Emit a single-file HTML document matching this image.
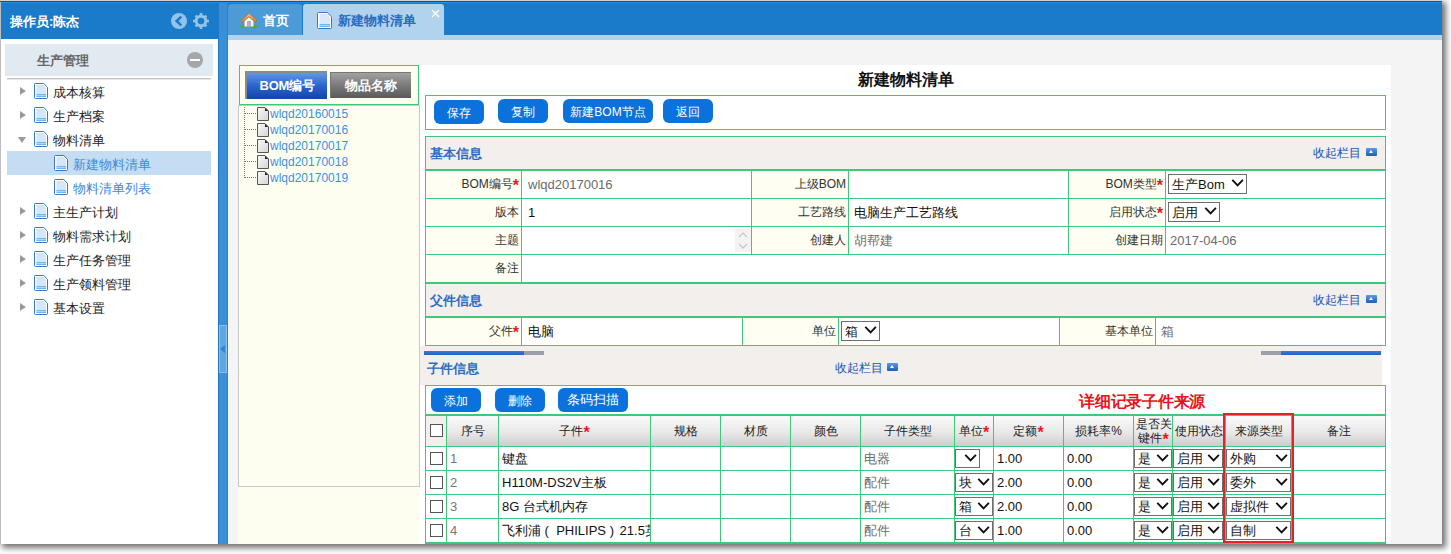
<!DOCTYPE html>
<html><head><meta charset="utf-8">
<style>
*{box-sizing:border-box;margin:0;padding:0}
html,body{width:1451px;height:554px;overflow:hidden;background:#fff;font-family:"Liberation Sans",sans-serif;color:#333}
.a{position:absolute}
#win{position:absolute;left:0;top:0;width:1442px;height:544px;background:#f4f4f4;overflow:hidden;box-shadow:3px 3px 6px 1px rgba(0,0,0,.55)}
.btn{position:absolute;height:24px;background:#0b72dc;border-radius:6px;color:#fff;font-size:12px;line-height:24px;text-align:center}
.cico{position:absolute;width:11px;height:8px;background:linear-gradient(#5b9ae6,#1f5cb8);border-radius:1px}
.cico:after{content:"";position:absolute;left:3px;top:2px;border-bottom:3px solid #fff;border-left:2.5px solid transparent;border-right:2.5px solid transparent}
.req{color:#f0141e;font-weight:bold;font-size:16px;line-height:1px;position:relative;top:3px}
.sel{position:absolute;border:1px solid #6e6e6e;background:#fff;font-size:13px;padding-left:3px;color:#111;white-space:nowrap}
</style></head><body>
<div id="win">
<div class="a" style="left:0px;top:0px;width:1442px;height:1px;background:#d9d0c7;"></div>
<div class="a" style="left:0px;top:1px;width:1442px;height:1px;background:#0557a6;"></div>
<div class="a" style="left:0px;top:2px;width:1px;height:542px;background:#bdbdbd;"></div>
<div class="a" style="left:1px;top:2px;width:217px;height:37px;background:#1a7bcb;"></div>
<div class="a" style="left:10px;top:13px;height:16px;line-height:16px;font-size:13px;color:#fff;white-space:nowrap;font-weight:bold;top:14px">操作员:陈杰</div>
<svg class="a" style="left:170px;top:12px" width="18" height="18" viewBox="0 0 18 18"><circle cx="9" cy="9" r="8" fill="#93c3ea"/><path d="M11.3 4.6L6.6 9l4.7 4.4" fill="none" stroke="#1a7bcb" stroke-width="2.5"/></svg>
<svg class="a" style="left:192px;top:12px" width="18" height="18" viewBox="0 0 18 18"><g fill="#93c3ea"><circle cx="9" cy="9" r="6.3"/><rect x="7.7" y="1" width="2.6" height="16"/><rect x="1" y="7.7" width="16" height="2.6"/><rect x="7.7" y="1.3" width="2.6" height="15.4" transform="rotate(45 9 9)"/><rect x="7.7" y="1.3" width="2.6" height="15.4" transform="rotate(-45 9 9)"/></g><circle cx="9" cy="9" r="3.3" fill="#1a7bcb"/></svg>
<div class="a" style="left:1px;top:39px;width:217px;height:505px;background:#fff;"></div>
<div class="a" style="left:5px;top:44px;width:208px;height:32px;background:#e1e9f1;"></div>
<div class="a" style="left:37px;top:52px;height:16px;line-height:16px;font-size:13px;color:#666;white-space:nowrap;font-weight:bold;top:53px">生产管理</div>
<div class="a" style="left:187px;top:52px;width:16px;height:16px;border-radius:50%;background:#a4a6a8"></div>
<div class="a" style="left:190px;top:59px;width:10px;height:2px;background:#fff;"></div>
<div class="a" style="left:7px;top:78px;width:204px;height:1px;background:#c4c4c4;"></div>
<div class="a" style="left:7px;top:79px;width:204px;height:1px;background:#e6e6e6;"></div>
<div class="a" style="left:20px;top:87px;width:0;height:0;border-left:6px solid #9a9a9a;border-top:4.5px solid transparent;border-bottom:4.5px solid transparent"></div>
<svg class="a" style="left:34px;top:83px" width="14" height="16" viewBox="0 0 14 16"><path d="M1.5 .5h8.2l3.8 3.8v10.2a1 1 0 0 1-1 1h-11a1 1 0 0 1-1-1v-13a1 1 0 0 1 1-1z" fill="#fff" stroke="#3b74c9"/><path d="M2.5 2h6.8l2.7 2.7V11H2.5z" fill="#d3e6fa"/><rect x="2.5" y="11" width="9.5" height="3" fill="#68b9f2"/><rect x="3" y="12" width="8.5" height="1" fill="#a9dafb"/></svg>
<div class="a" style="left:53px;top:81px;height:24px;line-height:24px;font-size:13px;color:#222;white-space:nowrap;">成本核算</div>
<div class="a" style="left:20px;top:111px;width:0;height:0;border-left:6px solid #9a9a9a;border-top:4.5px solid transparent;border-bottom:4.5px solid transparent"></div>
<svg class="a" style="left:34px;top:107px" width="14" height="16" viewBox="0 0 14 16"><path d="M1.5 .5h8.2l3.8 3.8v10.2a1 1 0 0 1-1 1h-11a1 1 0 0 1-1-1v-13a1 1 0 0 1 1-1z" fill="#fff" stroke="#3b74c9"/><path d="M2.5 2h6.8l2.7 2.7V11H2.5z" fill="#d3e6fa"/><rect x="2.5" y="11" width="9.5" height="3" fill="#68b9f2"/><rect x="3" y="12" width="8.5" height="1" fill="#a9dafb"/></svg>
<div class="a" style="left:53px;top:105px;height:24px;line-height:24px;font-size:13px;color:#222;white-space:nowrap;">生产档案</div>
<div class="a" style="left:18px;top:137px;width:0;height:0;border-top:6px solid #9a9a9a;border-left:4.5px solid transparent;border-right:4.5px solid transparent"></div>
<svg class="a" style="left:34px;top:131px" width="14" height="16" viewBox="0 0 14 16"><path d="M1.5 .5h8.2l3.8 3.8v10.2a1 1 0 0 1-1 1h-11a1 1 0 0 1-1-1v-13a1 1 0 0 1 1-1z" fill="#fff" stroke="#3b74c9"/><path d="M2.5 2h6.8l2.7 2.7V11H2.5z" fill="#d3e6fa"/><rect x="2.5" y="11" width="9.5" height="3" fill="#68b9f2"/><rect x="3" y="12" width="8.5" height="1" fill="#a9dafb"/></svg>
<div class="a" style="left:53px;top:129px;height:24px;line-height:24px;font-size:13px;color:#222;white-space:nowrap;">物料清单</div>
<div class="a" style="left:7px;top:151px;width:204px;height:24px;background:#c4ddf2;"></div>
<svg class="a" style="left:54px;top:155px" width="14" height="16" viewBox="0 0 14 16"><path d="M1.5 .5h8.2l3.8 3.8v10.2a1 1 0 0 1-1 1h-11a1 1 0 0 1-1-1v-13a1 1 0 0 1 1-1z" fill="#fff" stroke="#3b74c9"/><path d="M2.5 2h6.8l2.7 2.7V11H2.5z" fill="#d3e6fa"/><rect x="2.5" y="11" width="9.5" height="3" fill="#68b9f2"/><rect x="3" y="12" width="8.5" height="1" fill="#a9dafb"/></svg>
<div class="a" style="left:73px;top:153px;height:24px;line-height:24px;font-size:13px;color:#3c8ad9;white-space:nowrap;">新建物料清单</div>
<svg class="a" style="left:54px;top:179px" width="14" height="16" viewBox="0 0 14 16"><path d="M1.5 .5h8.2l3.8 3.8v10.2a1 1 0 0 1-1 1h-11a1 1 0 0 1-1-1v-13a1 1 0 0 1 1-1z" fill="#fff" stroke="#3b74c9"/><path d="M2.5 2h6.8l2.7 2.7V11H2.5z" fill="#d3e6fa"/><rect x="2.5" y="11" width="9.5" height="3" fill="#68b9f2"/><rect x="3" y="12" width="8.5" height="1" fill="#a9dafb"/></svg>
<div class="a" style="left:73px;top:177px;height:24px;line-height:24px;font-size:13px;color:#3c8ad9;white-space:nowrap;">物料清单列表</div>
<div class="a" style="left:20px;top:207px;width:0;height:0;border-left:6px solid #9a9a9a;border-top:4.5px solid transparent;border-bottom:4.5px solid transparent"></div>
<svg class="a" style="left:34px;top:203px" width="14" height="16" viewBox="0 0 14 16"><path d="M1.5 .5h8.2l3.8 3.8v10.2a1 1 0 0 1-1 1h-11a1 1 0 0 1-1-1v-13a1 1 0 0 1 1-1z" fill="#fff" stroke="#3b74c9"/><path d="M2.5 2h6.8l2.7 2.7V11H2.5z" fill="#d3e6fa"/><rect x="2.5" y="11" width="9.5" height="3" fill="#68b9f2"/><rect x="3" y="12" width="8.5" height="1" fill="#a9dafb"/></svg>
<div class="a" style="left:53px;top:201px;height:24px;line-height:24px;font-size:13px;color:#222;white-space:nowrap;">主生产计划</div>
<div class="a" style="left:20px;top:231px;width:0;height:0;border-left:6px solid #9a9a9a;border-top:4.5px solid transparent;border-bottom:4.5px solid transparent"></div>
<svg class="a" style="left:34px;top:227px" width="14" height="16" viewBox="0 0 14 16"><path d="M1.5 .5h8.2l3.8 3.8v10.2a1 1 0 0 1-1 1h-11a1 1 0 0 1-1-1v-13a1 1 0 0 1 1-1z" fill="#fff" stroke="#3b74c9"/><path d="M2.5 2h6.8l2.7 2.7V11H2.5z" fill="#d3e6fa"/><rect x="2.5" y="11" width="9.5" height="3" fill="#68b9f2"/><rect x="3" y="12" width="8.5" height="1" fill="#a9dafb"/></svg>
<div class="a" style="left:53px;top:225px;height:24px;line-height:24px;font-size:13px;color:#222;white-space:nowrap;">物料需求计划</div>
<div class="a" style="left:20px;top:255px;width:0;height:0;border-left:6px solid #9a9a9a;border-top:4.5px solid transparent;border-bottom:4.5px solid transparent"></div>
<svg class="a" style="left:34px;top:251px" width="14" height="16" viewBox="0 0 14 16"><path d="M1.5 .5h8.2l3.8 3.8v10.2a1 1 0 0 1-1 1h-11a1 1 0 0 1-1-1v-13a1 1 0 0 1 1-1z" fill="#fff" stroke="#3b74c9"/><path d="M2.5 2h6.8l2.7 2.7V11H2.5z" fill="#d3e6fa"/><rect x="2.5" y="11" width="9.5" height="3" fill="#68b9f2"/><rect x="3" y="12" width="8.5" height="1" fill="#a9dafb"/></svg>
<div class="a" style="left:53px;top:249px;height:24px;line-height:24px;font-size:13px;color:#222;white-space:nowrap;">生产任务管理</div>
<div class="a" style="left:20px;top:279px;width:0;height:0;border-left:6px solid #9a9a9a;border-top:4.5px solid transparent;border-bottom:4.5px solid transparent"></div>
<svg class="a" style="left:34px;top:275px" width="14" height="16" viewBox="0 0 14 16"><path d="M1.5 .5h8.2l3.8 3.8v10.2a1 1 0 0 1-1 1h-11a1 1 0 0 1-1-1v-13a1 1 0 0 1 1-1z" fill="#fff" stroke="#3b74c9"/><path d="M2.5 2h6.8l2.7 2.7V11H2.5z" fill="#d3e6fa"/><rect x="2.5" y="11" width="9.5" height="3" fill="#68b9f2"/><rect x="3" y="12" width="8.5" height="1" fill="#a9dafb"/></svg>
<div class="a" style="left:53px;top:273px;height:24px;line-height:24px;font-size:13px;color:#222;white-space:nowrap;">生产领料管理</div>
<div class="a" style="left:20px;top:303px;width:0;height:0;border-left:6px solid #9a9a9a;border-top:4.5px solid transparent;border-bottom:4.5px solid transparent"></div>
<svg class="a" style="left:34px;top:299px" width="14" height="16" viewBox="0 0 14 16"><path d="M1.5 .5h8.2l3.8 3.8v10.2a1 1 0 0 1-1 1h-11a1 1 0 0 1-1-1v-13a1 1 0 0 1 1-1z" fill="#fff" stroke="#3b74c9"/><path d="M2.5 2h6.8l2.7 2.7V11H2.5z" fill="#d3e6fa"/><rect x="2.5" y="11" width="9.5" height="3" fill="#68b9f2"/><rect x="3" y="12" width="8.5" height="1" fill="#a9dafb"/></svg>
<div class="a" style="left:53px;top:297px;height:24px;line-height:24px;font-size:13px;color:#222;white-space:nowrap;">基本设置</div>
<div class="a" style="left:218px;top:2px;width:10px;height:542px;background:#3a8fd6;border-left:1px solid #1f78c9;border-right:1px solid #2a82cf"></div>
<div class="a" style="left:219px;top:325px;width:8px;height:48px;background:#62a6e0;border:1px solid #8cc0ec"></div>
<div class="a" style="left:220px;top:345px;width:0;height:0;border-right:5px solid #2d86d3;border-top:4.5px solid transparent;border-bottom:4.5px solid transparent"></div>
<div class="a" style="left:228px;top:2px;width:1214px;height:33px;background:#1a7bcb;"></div>
<div class="a" style="left:228px;top:4px;width:74px;height:31px;background:#4c9ad8;border-radius:3px 3px 0 0"></div>
<svg class="a" style="left:240px;top:12px" width="18" height="16" viewBox="0 0 18 16"><defs><linearGradient id="roof" x1="0" y1="0" x2="0" y2="1"><stop offset="0" stop-color="#f3c070"/><stop offset="1" stop-color="#c7802e"/></linearGradient></defs><ellipse cx="4" cy="14.3" rx="3.6" ry="1.6" fill="#4caa3a"/><ellipse cx="14" cy="14.3" rx="3.6" ry="1.6" fill="#4caa3a"/><path d="M4.6 8.6L9 4.9 13.4 8.6V14.6H4.6z" fill="#f8f8f8" stroke="#b9b9b9" stroke-width=".6"/><rect x="7.3" y="9.2" width="3.4" height="5.4" fill="#8a8a8a"/><rect x="7.9" y="9.8" width="2.2" height="4.8" fill="#b4b4b4"/><path d="M.8 8.6L9 1.3 17.2 8.6 15.6 10.4 9 4.8 2.4 10.4z" fill="url(#roof)" stroke="#a8682a" stroke-width=".6"/></svg>
<div class="a" style="left:263px;top:13px;height:16px;line-height:16px;font-size:13px;color:#fff;white-space:nowrap;font-weight:bold">首页</div>
<div class="a" style="left:303px;top:4px;width:141px;height:31px;background:#b1d3ee;border-radius:3px 3px 0 0"></div>
<svg class="a" style="left:317px;top:12px" width="15" height="17" viewBox="0 0 15 17"><path d="M1.5 .5h8.7l4.3 4.3v10.7a1 1 0 0 1-1 1h-12a1 1 0 0 1-1-1v-14a1 1 0 0 1 1-1z" fill="#fff" stroke="#3b74c9"/><path d="M2.5 2h7.3l3.2 3.2V12H2.5z" fill="#d9e9fa"/><rect x="2.5" y="12" width="10.5" height="3" fill="#68b9f2"/><rect x="3" y="13" width="9.5" height="1" fill="#a9dafb"/></svg>
<div class="a" style="left:338px;top:13px;height:16px;line-height:16px;font-size:13px;color:#2a6cc0;white-space:nowrap;font-weight:bold">新建物料清单</div>
<svg class="a" style="left:431px;top:9px" width="9" height="9" viewBox="0 0 9 9"><path d="M1 1l7 7M8 1L1 8" stroke="#fff" stroke-width="1.3"/></svg>
<div class="a" style="left:228px;top:35px;width:1214px;height:5px;background:#b1d3ee;"></div>
<div class="a" style="left:1px;top:2px;width:1441px;height:1px;background:#1f8fe6;"></div>
<div class="a" style="left:238px;top:105px;width:182px;height:439px;background:#fefef0;"></div>
<div class="a" style="left:239px;top:65px;width:180px;height:40px;background:#fefef0;border:1px solid #3ec879"></div>
<div class="a" style="left:245px;top:71px;width:82px;height:28px;border-top:2px solid #8a8a8a;border-left:2px solid #8a8a8a;background:linear-gradient(#6197e4,#2a64cc 50%,#1244ac);color:#fff;font-weight:bold;font-size:13px;line-height:26px;text-align:center;letter-spacing:-0.3px">BOM编号</div>
<div class="a" style="left:330px;top:72px;width:81px;height:26px;border-top:1px solid #777;border-left:1px solid #777;background:linear-gradient(#a2a2a2,#7a7a7a 50%,#5a5a5a);color:#fff;font-weight:bold;font-size:13px;line-height:25px;text-align:center">物品名称</div>
<div class="a" style="left:238px;top:105px;width:182px;height:382px;background:transparent;border:1px solid #c9c9c9"></div>
<div class="a" style="left:244px;top:107px;width:1px;height:71px;border-left:1px dotted #777"></div>
<div class="a" style="left:245px;top:113px;width:11px;height:1px;border-top:1px dotted #777"></div>
<svg class="a" style="left:257px;top:107px" width="12" height="14" viewBox="0 0 12 14"><defs><linearGradient id="fg" x1="0" y1="0" x2="1" y2="1"><stop offset="0" stop-color="#fafafa"/><stop offset="1" stop-color="#d4d4d4"/></linearGradient></defs><path d="M.5 .5h7.5l3.5 3.5v9.5h-11z" fill="url(#fg)" stroke="#555"/><path d="M8 .8l3.2 3.2H8z" fill="#222"/></svg>
<div class="a" style="left:270px;top:106px;height:16px;line-height:16px;font-size:12px;color:#3d8ee6;white-space:nowrap;">wlqd20160015</div>
<div class="a" style="left:245px;top:129px;width:11px;height:1px;border-top:1px dotted #777"></div>
<svg class="a" style="left:257px;top:123px" width="12" height="14" viewBox="0 0 12 14"><defs><linearGradient id="fg" x1="0" y1="0" x2="1" y2="1"><stop offset="0" stop-color="#fafafa"/><stop offset="1" stop-color="#d4d4d4"/></linearGradient></defs><path d="M.5 .5h7.5l3.5 3.5v9.5h-11z" fill="url(#fg)" stroke="#555"/><path d="M8 .8l3.2 3.2H8z" fill="#222"/></svg>
<div class="a" style="left:270px;top:122px;height:16px;line-height:16px;font-size:12px;color:#3d8ee6;white-space:nowrap;">wlqd20170016</div>
<div class="a" style="left:245px;top:145px;width:11px;height:1px;border-top:1px dotted #777"></div>
<svg class="a" style="left:257px;top:139px" width="12" height="14" viewBox="0 0 12 14"><defs><linearGradient id="fg" x1="0" y1="0" x2="1" y2="1"><stop offset="0" stop-color="#fafafa"/><stop offset="1" stop-color="#d4d4d4"/></linearGradient></defs><path d="M.5 .5h7.5l3.5 3.5v9.5h-11z" fill="url(#fg)" stroke="#555"/><path d="M8 .8l3.2 3.2H8z" fill="#222"/></svg>
<div class="a" style="left:270px;top:138px;height:16px;line-height:16px;font-size:12px;color:#3d8ee6;white-space:nowrap;">wlqd20170017</div>
<div class="a" style="left:245px;top:161px;width:11px;height:1px;border-top:1px dotted #777"></div>
<svg class="a" style="left:257px;top:155px" width="12" height="14" viewBox="0 0 12 14"><defs><linearGradient id="fg" x1="0" y1="0" x2="1" y2="1"><stop offset="0" stop-color="#fafafa"/><stop offset="1" stop-color="#d4d4d4"/></linearGradient></defs><path d="M.5 .5h7.5l3.5 3.5v9.5h-11z" fill="url(#fg)" stroke="#555"/><path d="M8 .8l3.2 3.2H8z" fill="#222"/></svg>
<div class="a" style="left:270px;top:154px;height:16px;line-height:16px;font-size:12px;color:#3d8ee6;white-space:nowrap;">wlqd20170018</div>
<div class="a" style="left:245px;top:177px;width:11px;height:1px;border-top:1px dotted #777"></div>
<svg class="a" style="left:257px;top:171px" width="12" height="14" viewBox="0 0 12 14"><defs><linearGradient id="fg" x1="0" y1="0" x2="1" y2="1"><stop offset="0" stop-color="#fafafa"/><stop offset="1" stop-color="#d4d4d4"/></linearGradient></defs><path d="M.5 .5h7.5l3.5 3.5v9.5h-11z" fill="url(#fg)" stroke="#555"/><path d="M8 .8l3.2 3.2H8z" fill="#222"/></svg>
<div class="a" style="left:270px;top:170px;height:16px;line-height:16px;font-size:12px;color:#3d8ee6;white-space:nowrap;">wlqd20170019</div>
<div class="a" style="left:420px;top:65px;width:971px;height:479px;background:#fff;"></div>
<div class="a" style="left:420px;top:70px;width:971px;text-align:center;font-size:16px;font-weight:bold;color:#111;line-height:20px">新建物料清单</div>
<div class="a" style="left:425px;top:95px;width:961px;height:1px;background:#3ec879;"></div>
<div class="a" style="left:425px;top:129px;width:961px;height:1px;background:#3ec879;"></div>
<div class="a" style="left:425px;top:95px;width:1px;height:35px;background:#3ec879;"></div>
<div class="a" style="left:1385px;top:95px;width:1px;height:35px;background:#3ec879;"></div>
<div class="btn" style="left:434px;top:100px;width:50px;font-size:12px;line-height:26px">保存</div>
<div class="btn" style="left:498px;top:99px;width:50px;font-size:12px;line-height:26px">复制</div>
<div class="btn" style="left:563px;top:99px;width:90px;font-size:12px;line-height:26px">新建BOM节点</div>
<div class="btn" style="left:663px;top:99px;width:50px;font-size:12px;line-height:26px">返回</div>
<div class="a" style="left:425px;top:137px;width:960px;height:32px;background:#f2efed;"></div>
<div class="a" style="left:430px;top:138px;height:32px;line-height:32px;font-size:13px;color:#2b6cc4;white-space:nowrap;font-weight:bold">基本信息</div>
<div class="a" style="left:1313px;top:137px;height:32px;line-height:32px;font-size:12px;color:#1d52b3;white-space:nowrap;">收起栏目</div>
<div class="cico" style="left:1366px;top:148px"></div>
<div class="a" style="left:426px;top:171px;width:95px;height:27px;background:#fefef2;"></div>
<div class="a" style="left:752px;top:171px;width:96px;height:27px;background:#fefef2;"></div>
<div class="a" style="left:1069px;top:171px;width:96px;height:27px;background:#fefef2;"></div>
<div class="a" style="left:426px;top:199px;width:95px;height:27px;background:#fefef2;"></div>
<div class="a" style="left:752px;top:199px;width:96px;height:27px;background:#fefef2;"></div>
<div class="a" style="left:1069px;top:199px;width:96px;height:27px;background:#fefef2;"></div>
<div class="a" style="left:426px;top:227px;width:95px;height:27px;background:#fefef2;"></div>
<div class="a" style="left:752px;top:227px;width:96px;height:27px;background:#fefef2;"></div>
<div class="a" style="left:1069px;top:227px;width:96px;height:27px;background:#fefef2;"></div>
<div class="a" style="left:426px;top:255px;width:95px;height:27px;background:#fefef2;"></div>
<div class="a" style="left:425px;top:136px;width:961px;height:1px;background:#3ec879;"></div>
<div class="a" style="left:425px;top:169px;width:961px;height:2px;background:#3ec879;"></div>
<div class="a" style="left:425px;top:198px;width:961px;height:1px;background:#3ec879;"></div>
<div class="a" style="left:425px;top:226px;width:961px;height:1px;background:#3ec879;"></div>
<div class="a" style="left:425px;top:254px;width:961px;height:1px;background:#3ec879;"></div>
<div class="a" style="left:425px;top:282px;width:961px;height:2px;background:#3ec879;"></div>
<div class="a" style="left:425px;top:136px;width:1px;height:210px;background:#3ec879;"></div>
<div class="a" style="left:1385px;top:136px;width:1px;height:210px;background:#3ec879;"></div>
<div class="a" style="left:521px;top:170px;width:1px;height:85px;background:#3ec879;"></div>
<div class="a" style="left:751px;top:170px;width:1px;height:85px;background:#3ec879;"></div>
<div class="a" style="left:848px;top:170px;width:1px;height:85px;background:#3ec879;"></div>
<div class="a" style="left:1068px;top:170px;width:1px;height:85px;background:#3ec879;"></div>
<div class="a" style="left:1165px;top:170px;width:1px;height:85px;background:#3ec879;"></div>
<div class="a" style="left:521px;top:254px;width:1px;height:29px;background:#3ec879;"></div>
<div class="a" style="right:923px;top:171px;height:27px;line-height:27px;font-size:12px;color:#333;white-space:nowrap;">BOM编号<span class="req">*</span></div>
<div class="a" style="right:596px;top:171px;height:27px;line-height:27px;font-size:12px;color:#333;white-space:nowrap;">上级BOM</div>
<div class="a" style="right:279px;top:171px;height:27px;line-height:27px;font-size:12px;color:#333;white-space:nowrap;">BOM类型<span class="req">*</span></div>
<div class="a" style="right:923px;top:199px;height:27px;line-height:27px;font-size:12px;color:#333;white-space:nowrap;">版本</div>
<div class="a" style="right:596px;top:199px;height:27px;line-height:27px;font-size:12px;color:#333;white-space:nowrap;">工艺路线</div>
<div class="a" style="right:279px;top:199px;height:27px;line-height:27px;font-size:12px;color:#333;white-space:nowrap;">启用状态<span class="req">*</span></div>
<div class="a" style="right:923px;top:227px;height:27px;line-height:27px;font-size:12px;color:#333;white-space:nowrap;">主题</div>
<div class="a" style="right:596px;top:227px;height:27px;line-height:27px;font-size:12px;color:#333;white-space:nowrap;">创建人</div>
<div class="a" style="right:279px;top:227px;height:27px;line-height:27px;font-size:12px;color:#333;white-space:nowrap;">创建日期</div>
<div class="a" style="right:923px;top:255px;height:27px;line-height:27px;font-size:12px;color:#333;white-space:nowrap;">备注</div>
<div class="a" style="left:528px;top:171px;height:27px;line-height:27px;font-size:13px;color:#6b6b6b;white-space:nowrap;">wlqd20170016</div>
<div class="sel" style="left:1168px;top:174px;width:79px;height:20px;line-height:18px;padding-top:1px;">生产Bom<svg class="a" style="right:2px;top:3px" width="13" height="9" viewBox="0 0 13 9"><path d="M1.3 1.8l5.3 5.6 5.3-5.6" fill="none" stroke="#111" stroke-width="1.9"/></svg></div>
<div class="a" style="left:528px;top:199px;height:27px;line-height:27px;font-size:13px;color:#111;white-space:nowrap;">1</div>
<div class="a" style="left:854px;top:199px;height:27px;line-height:27px;font-size:13px;color:#111;white-space:nowrap;">电脑生产工艺路线</div>
<div class="sel" style="left:1168px;top:202px;width:52px;height:20px;line-height:18px;padding-top:1px;">启用<svg class="a" style="right:2px;top:3px" width="13" height="9" viewBox="0 0 13 9"><path d="M1.3 1.8l5.3 5.6 5.3-5.6" fill="none" stroke="#111" stroke-width="1.9"/></svg></div>
<div class="a" style="left:735px;top:229px;width:16px;height:23px;background:#f3f3f3;"></div>
<svg class="a" style="left:735px;top:229px" width="16" height="23" viewBox="0 0 16 23"><path d="M4 8l4-4 4 4M4 15l4 4 4-4" fill="none" stroke="#c4c4c4" stroke-width="1.2"/></svg>
<div class="a" style="left:854px;top:227px;height:27px;line-height:27px;font-size:13px;color:#6b6b6b;white-space:nowrap;">胡帮建</div>
<div class="a" style="left:1170px;top:227px;height:27px;line-height:27px;font-size:13px;color:#6b6b6b;white-space:nowrap;">2017-04-06</div>
<div class="a" style="left:426px;top:284px;width:959px;height:32px;background:#f2efed;"></div>
<div class="a" style="left:430px;top:285px;height:32px;line-height:32px;font-size:13px;color:#2b6cc4;white-space:nowrap;font-weight:bold">父件信息</div>
<div class="a" style="left:1313px;top:284px;height:32px;line-height:32px;font-size:12px;color:#1d52b3;white-space:nowrap;">收起栏目</div>
<div class="cico" style="left:1366px;top:295px"></div>
<div class="a" style="left:425px;top:316px;width:961px;height:2px;background:#3ec879;"></div>
<div class="a" style="left:425px;top:345px;width:961px;height:1px;background:#3ec879;"></div>
<div class="a" style="left:426px;top:318px;width:95px;height:27px;background:#fefef2;"></div>
<div class="a" style="left:743px;top:318px;width:95px;height:27px;background:#fefef2;"></div>
<div class="a" style="left:1060px;top:318px;width:95px;height:27px;background:#fefef2;"></div>
<div class="a" style="left:521px;top:318px;width:1px;height:28px;background:#3ec879;"></div>
<div class="a" style="left:742px;top:318px;width:1px;height:28px;background:#3ec879;"></div>
<div class="a" style="left:838px;top:318px;width:1px;height:28px;background:#3ec879;"></div>
<div class="a" style="left:1059px;top:318px;width:1px;height:28px;background:#3ec879;"></div>
<div class="a" style="left:1155px;top:318px;width:1px;height:28px;background:#3ec879;"></div>
<div class="a" style="right:923px;top:318px;height:27px;line-height:27px;font-size:12px;color:#333;white-space:nowrap;">父件<span class="req">*</span></div>
<div class="a" style="right:606px;top:318px;height:27px;line-height:27px;font-size:12px;color:#333;white-space:nowrap;">单位</div>
<div class="a" style="right:289px;top:318px;height:27px;line-height:27px;font-size:12px;color:#333;white-space:nowrap;">基本单位</div>
<div class="a" style="left:528px;top:318px;height:27px;line-height:27px;font-size:13px;color:#111;white-space:nowrap;">电脑</div>
<div class="sel" style="left:841px;top:321px;width:39px;height:20px;line-height:18px;padding-top:1px;">箱<svg class="a" style="right:2px;top:3px" width="13" height="9" viewBox="0 0 13 9"><path d="M1.3 1.8l5.3 5.6 5.3-5.6" fill="none" stroke="#111" stroke-width="1.9"/></svg></div>
<div class="a" style="left:1161px;top:318px;height:27px;line-height:27px;font-size:13px;color:#6b6b6b;white-space:nowrap;">箱</div>
<div class="a" style="left:420px;top:346px;width:962px;height:39px;background:#f2efed;"></div>
<div class="a" style="left:424px;top:351px;width:100px;height:4px;background:linear-gradient(#3580d4,#2263bd);"></div>
<div class="a" style="left:524px;top:351px;width:20px;height:4px;background:#9aa0ab;"></div>
<div class="a" style="left:1261px;top:351px;width:20px;height:4px;background:#9aa0ab;"></div>
<div class="a" style="left:1281px;top:351px;width:100px;height:4px;background:linear-gradient(#3580d4,#2263bd);"></div>
<div class="a" style="left:427px;top:359px;height:20px;line-height:20px;font-size:13px;color:#2b6cc4;white-space:nowrap;font-weight:bold">子件信息</div>
<div class="a" style="left:835px;top:358px;height:20px;line-height:20px;font-size:12px;color:#1d52b3;white-space:nowrap;">收起栏目</div>
<div class="cico" style="left:887px;top:363px"></div>
<div class="a" style="left:425px;top:386px;width:960px;height:28px;background:#fff;"></div>
<div class="a" style="left:425px;top:385px;width:961px;height:1px;background:#3ec879;"></div>
<div class="a" style="left:425px;top:385px;width:1px;height:159px;background:#3ec879;"></div>
<div class="a" style="left:1385px;top:385px;width:1px;height:159px;background:#3ec879;"></div>
<div class="a" style="left:425px;top:414px;width:961px;height:2px;background:#3ec879;"></div>
<div class="btn" style="left:431px;top:388px;width:50px;font-size:12px;line-height:26px">添加</div>
<div class="btn" style="left:495px;top:388px;width:50px;font-size:12px;line-height:26px">删除</div>
<div class="btn" style="left:558px;top:388px;width:70px;font-size:13px;line-height:24px">条码扫描</div>
<div class="a" style="left:1079px;top:389px;height:26px;line-height:26px;font-size:16px;color:#e8141c;white-space:nowrap;font-weight:bold;letter-spacing:-0.25px">详细记录子件来源</div>
<div class="a" style="left:426px;top:416px;width:20px;height:30px;background:#f3efec;"></div>
<div class="a" style="left:447px;top:416px;width:51px;height:30px;background:linear-gradient(#fafafa,#e8e8e8 55%,#cdcdcd);"></div>
<div class="a" style="left:499px;top:416px;width:151px;height:30px;background:linear-gradient(#fafafa,#e8e8e8 55%,#cdcdcd);"></div>
<div class="a" style="left:651px;top:416px;width:69px;height:30px;background:linear-gradient(#fafafa,#e8e8e8 55%,#cdcdcd);"></div>
<div class="a" style="left:721px;top:416px;width:69px;height:30px;background:linear-gradient(#fafafa,#e8e8e8 55%,#cdcdcd);"></div>
<div class="a" style="left:791px;top:416px;width:69px;height:30px;background:linear-gradient(#fafafa,#e8e8e8 55%,#cdcdcd);"></div>
<div class="a" style="left:861px;top:416px;width:93px;height:30px;background:linear-gradient(#fafafa,#e8e8e8 55%,#cdcdcd);"></div>
<div class="a" style="left:955px;top:416px;width:38px;height:30px;background:linear-gradient(#fafafa,#e8e8e8 55%,#cdcdcd);"></div>
<div class="a" style="left:994px;top:416px;width:69px;height:30px;background:linear-gradient(#fafafa,#e8e8e8 55%,#cdcdcd);"></div>
<div class="a" style="left:1064px;top:416px;width:69px;height:30px;background:linear-gradient(#fafafa,#e8e8e8 55%,#cdcdcd);"></div>
<div class="a" style="left:1134px;top:416px;width:38px;height:30px;background:linear-gradient(#fafafa,#e8e8e8 55%,#cdcdcd);"></div>
<div class="a" style="left:1173px;top:416px;width:52px;height:30px;background:linear-gradient(#fafafa,#e8e8e8 55%,#cdcdcd);"></div>
<div class="a" style="left:1226px;top:416px;width:65px;height:30px;background:linear-gradient(#fafafa,#e8e8e8 55%,#cdcdcd);"></div>
<div class="a" style="left:1292px;top:416px;width:93px;height:30px;background:linear-gradient(#fafafa,#e8e8e8 55%,#cdcdcd);"></div>
<div class="a" style="left:425px;top:446px;width:961px;height:1px;background:#3ec879;"></div>
<div class="a" style="left:425px;top:470px;width:961px;height:1px;background:#3ec879;"></div>
<div class="a" style="left:425px;top:494px;width:961px;height:1px;background:#3ec879;"></div>
<div class="a" style="left:425px;top:518px;width:961px;height:1px;background:#3ec879;"></div>
<div class="a" style="left:425px;top:542px;width:961px;height:2px;background:#3ec879;"></div>
<div class="a" style="left:446px;top:416px;width:1px;height:127px;background:#3ec879;"></div>
<div class="a" style="left:498px;top:416px;width:1px;height:127px;background:#3ec879;"></div>
<div class="a" style="left:650px;top:416px;width:1px;height:127px;background:#3ec879;"></div>
<div class="a" style="left:720px;top:416px;width:1px;height:127px;background:#3ec879;"></div>
<div class="a" style="left:790px;top:416px;width:1px;height:127px;background:#3ec879;"></div>
<div class="a" style="left:860px;top:416px;width:1px;height:127px;background:#3ec879;"></div>
<div class="a" style="left:954px;top:416px;width:1px;height:127px;background:#3ec879;"></div>
<div class="a" style="left:993px;top:416px;width:1px;height:127px;background:#3ec879;"></div>
<div class="a" style="left:1063px;top:416px;width:1px;height:127px;background:#3ec879;"></div>
<div class="a" style="left:1133px;top:416px;width:1px;height:127px;background:#3ec879;"></div>
<div class="a" style="left:1172px;top:416px;width:1px;height:127px;background:#3ec879;"></div>
<div class="a" style="left:1225px;top:416px;width:1px;height:127px;background:#3ec879;"></div>
<div class="a" style="left:1291px;top:416px;width:1px;height:127px;background:#3ec879;"></div>
<div class="a" style="left:430px;top:424px;width:13px;height:13px;background:#fff;border:1px solid #555"></div>
<div class="a" style="left:447px;top:416px;width:51px;height:30px;line-height:30px;text-align:center;font-size:12px;color:#222;white-space:nowrap">序号</div>
<div class="a" style="left:499px;top:416px;width:151px;height:30px;line-height:30px;text-align:center;font-size:12px;color:#222;white-space:nowrap">子件<span class="req">*</span></div>
<div class="a" style="left:651px;top:416px;width:69px;height:30px;line-height:30px;text-align:center;font-size:12px;color:#222;white-space:nowrap">规格</div>
<div class="a" style="left:721px;top:416px;width:69px;height:30px;line-height:30px;text-align:center;font-size:12px;color:#222;white-space:nowrap">材质</div>
<div class="a" style="left:791px;top:416px;width:69px;height:30px;line-height:30px;text-align:center;font-size:12px;color:#222;white-space:nowrap">颜色</div>
<div class="a" style="left:861px;top:416px;width:93px;height:30px;line-height:30px;text-align:center;font-size:12px;color:#222;white-space:nowrap">子件类型</div>
<div class="a" style="left:955px;top:416px;width:38px;height:30px;line-height:30px;text-align:center;font-size:12px;color:#222;white-space:nowrap">单位<span class="req">*</span></div>
<div class="a" style="left:994px;top:416px;width:69px;height:30px;line-height:30px;text-align:center;font-size:12px;color:#222;white-space:nowrap">定额<span class="req">*</span></div>
<div class="a" style="left:1064px;top:416px;width:69px;height:30px;line-height:30px;text-align:center;font-size:12px;color:#222;white-space:nowrap">损耗率%</div>
<div class="a" style="left:1173px;top:416px;width:52px;height:30px;line-height:30px;text-align:center;font-size:12px;color:#222;white-space:nowrap">使用状态</div>
<div class="a" style="left:1226px;top:416px;width:65px;height:30px;line-height:30px;text-align:center;font-size:12px;color:#222;white-space:nowrap">来源类型</div>
<div class="a" style="left:1292px;top:416px;width:93px;height:30px;line-height:30px;text-align:center;font-size:12px;color:#222;white-space:nowrap">备注</div>
<div class="a" style="left:1134px;top:416px;width:39px;height:30px;line-height:14px;padding-top:1px;text-align:center;font-size:12px;color:#222">是否关<br>键件<span class="req">*</span></div>
<div class="a" style="left:430px;top:452px;width:13px;height:13px;background:#fff;border:1px solid #555"></div>
<div class="a" style="left:450px;top:447px;height:23px;line-height:23px;font-size:13px;color:#777;white-space:nowrap;">1</div>
<div class="a" style="left:502px;top:447px;width:148px;height:23px;line-height:23px;font-size:13px;color:#111;white-space:nowrap;overflow:hidden">键盘</div>
<div class="a" style="left:864px;top:447px;height:23px;line-height:23px;font-size:13px;color:#6b6b6b;white-space:nowrap;">电器</div>
<div class="sel" style="left:955px;top:449px;width:25px;height:19px;line-height:17px;"><svg class="a" style="right:2px;top:3px" width="13" height="9" viewBox="0 0 13 9"><path d="M1.3 1.8l5.3 5.6 5.3-5.6" fill="none" stroke="#111" stroke-width="1.9"/></svg></div>
<div class="a" style="left:997px;top:447px;height:23px;line-height:23px;font-size:13px;color:#111;white-space:nowrap;">1.00</div>
<div class="a" style="left:1067px;top:447px;height:23px;line-height:23px;font-size:13px;color:#111;white-space:nowrap;">0.00</div>
<div class="sel" style="left:1134px;top:449px;width:38px;height:19px;line-height:17px;">是<svg class="a" style="right:2px;top:3px" width="13" height="9" viewBox="0 0 13 9"><path d="M1.3 1.8l5.3 5.6 5.3-5.6" fill="none" stroke="#111" stroke-width="1.9"/></svg></div>
<div class="sel" style="left:1173px;top:449px;width:50px;height:19px;line-height:17px;">启用<svg class="a" style="right:2px;top:3px" width="13" height="9" viewBox="0 0 13 9"><path d="M1.3 1.8l5.3 5.6 5.3-5.6" fill="none" stroke="#111" stroke-width="1.9"/></svg></div>
<div class="sel" style="left:1226px;top:449px;width:65px;height:19px;line-height:17px;">外购<svg class="a" style="right:2px;top:3px" width="13" height="9" viewBox="0 0 13 9"><path d="M1.3 1.8l5.3 5.6 5.3-5.6" fill="none" stroke="#111" stroke-width="1.9"/></svg></div>
<div class="a" style="left:430px;top:476px;width:13px;height:13px;background:#fff;border:1px solid #555"></div>
<div class="a" style="left:450px;top:471px;height:23px;line-height:23px;font-size:13px;color:#777;white-space:nowrap;">2</div>
<div class="a" style="left:502px;top:471px;width:148px;height:23px;line-height:23px;font-size:13px;color:#111;white-space:nowrap;overflow:hidden">H110M-DS2V主板</div>
<div class="a" style="left:864px;top:471px;height:23px;line-height:23px;font-size:13px;color:#6b6b6b;white-space:nowrap;">配件</div>
<div class="sel" style="left:955px;top:473px;width:38px;height:19px;line-height:17px;">块<svg class="a" style="right:2px;top:3px" width="13" height="9" viewBox="0 0 13 9"><path d="M1.3 1.8l5.3 5.6 5.3-5.6" fill="none" stroke="#111" stroke-width="1.9"/></svg></div>
<div class="a" style="left:997px;top:471px;height:23px;line-height:23px;font-size:13px;color:#111;white-space:nowrap;">2.00</div>
<div class="a" style="left:1067px;top:471px;height:23px;line-height:23px;font-size:13px;color:#111;white-space:nowrap;">0.00</div>
<div class="sel" style="left:1134px;top:473px;width:38px;height:19px;line-height:17px;">是<svg class="a" style="right:2px;top:3px" width="13" height="9" viewBox="0 0 13 9"><path d="M1.3 1.8l5.3 5.6 5.3-5.6" fill="none" stroke="#111" stroke-width="1.9"/></svg></div>
<div class="sel" style="left:1173px;top:473px;width:50px;height:19px;line-height:17px;">启用<svg class="a" style="right:2px;top:3px" width="13" height="9" viewBox="0 0 13 9"><path d="M1.3 1.8l5.3 5.6 5.3-5.6" fill="none" stroke="#111" stroke-width="1.9"/></svg></div>
<div class="sel" style="left:1226px;top:473px;width:65px;height:19px;line-height:17px;">委外<svg class="a" style="right:2px;top:3px" width="13" height="9" viewBox="0 0 13 9"><path d="M1.3 1.8l5.3 5.6 5.3-5.6" fill="none" stroke="#111" stroke-width="1.9"/></svg></div>
<div class="a" style="left:430px;top:500px;width:13px;height:13px;background:#fff;border:1px solid #555"></div>
<div class="a" style="left:450px;top:495px;height:23px;line-height:23px;font-size:13px;color:#777;white-space:nowrap;">3</div>
<div class="a" style="left:502px;top:495px;width:148px;height:23px;line-height:23px;font-size:13px;color:#111;white-space:nowrap;overflow:hidden">8G 台式机内存</div>
<div class="a" style="left:864px;top:495px;height:23px;line-height:23px;font-size:13px;color:#6b6b6b;white-space:nowrap;">配件</div>
<div class="sel" style="left:955px;top:497px;width:38px;height:19px;line-height:17px;">箱<svg class="a" style="right:2px;top:3px" width="13" height="9" viewBox="0 0 13 9"><path d="M1.3 1.8l5.3 5.6 5.3-5.6" fill="none" stroke="#111" stroke-width="1.9"/></svg></div>
<div class="a" style="left:997px;top:495px;height:23px;line-height:23px;font-size:13px;color:#111;white-space:nowrap;">2.00</div>
<div class="a" style="left:1067px;top:495px;height:23px;line-height:23px;font-size:13px;color:#111;white-space:nowrap;">0.00</div>
<div class="sel" style="left:1134px;top:497px;width:38px;height:19px;line-height:17px;">是<svg class="a" style="right:2px;top:3px" width="13" height="9" viewBox="0 0 13 9"><path d="M1.3 1.8l5.3 5.6 5.3-5.6" fill="none" stroke="#111" stroke-width="1.9"/></svg></div>
<div class="sel" style="left:1173px;top:497px;width:50px;height:19px;line-height:17px;">启用<svg class="a" style="right:2px;top:3px" width="13" height="9" viewBox="0 0 13 9"><path d="M1.3 1.8l5.3 5.6 5.3-5.6" fill="none" stroke="#111" stroke-width="1.9"/></svg></div>
<div class="sel" style="left:1226px;top:497px;width:65px;height:19px;line-height:17px;">虚拟件<svg class="a" style="right:2px;top:3px" width="13" height="9" viewBox="0 0 13 9"><path d="M1.3 1.8l5.3 5.6 5.3-5.6" fill="none" stroke="#111" stroke-width="1.9"/></svg></div>
<div class="a" style="left:430px;top:524px;width:13px;height:13px;background:#fff;border:1px solid #555"></div>
<div class="a" style="left:450px;top:519px;height:23px;line-height:23px;font-size:13px;color:#777;white-space:nowrap;">4</div>
<div class="a" style="left:502px;top:519px;width:148px;height:23px;line-height:23px;font-size:13px;color:#111;white-space:nowrap;overflow:hidden">飞利浦&nbsp;(&nbsp;&nbsp;PHILIPS&nbsp;)&nbsp;<span style="margin-left:2px">21.5</span>英寸</div>
<div class="a" style="left:864px;top:519px;height:23px;line-height:23px;font-size:13px;color:#6b6b6b;white-space:nowrap;">配件</div>
<div class="sel" style="left:955px;top:521px;width:38px;height:19px;line-height:17px;">台<svg class="a" style="right:2px;top:3px" width="13" height="9" viewBox="0 0 13 9"><path d="M1.3 1.8l5.3 5.6 5.3-5.6" fill="none" stroke="#111" stroke-width="1.9"/></svg></div>
<div class="a" style="left:997px;top:519px;height:23px;line-height:23px;font-size:13px;color:#111;white-space:nowrap;">1.00</div>
<div class="a" style="left:1067px;top:519px;height:23px;line-height:23px;font-size:13px;color:#111;white-space:nowrap;">0.00</div>
<div class="sel" style="left:1134px;top:521px;width:38px;height:19px;line-height:17px;">是<svg class="a" style="right:2px;top:3px" width="13" height="9" viewBox="0 0 13 9"><path d="M1.3 1.8l5.3 5.6 5.3-5.6" fill="none" stroke="#111" stroke-width="1.9"/></svg></div>
<div class="sel" style="left:1173px;top:521px;width:50px;height:19px;line-height:17px;">启用<svg class="a" style="right:2px;top:3px" width="13" height="9" viewBox="0 0 13 9"><path d="M1.3 1.8l5.3 5.6 5.3-5.6" fill="none" stroke="#111" stroke-width="1.9"/></svg></div>
<div class="sel" style="left:1226px;top:521px;width:65px;height:19px;line-height:17px;">自制<svg class="a" style="right:2px;top:3px" width="13" height="9" viewBox="0 0 13 9"><path d="M1.3 1.8l5.3 5.6 5.3-5.6" fill="none" stroke="#111" stroke-width="1.9"/></svg></div>
<div class="a" style="left:1223px;top:413px;width:71px;height:130px;border:2px solid #e0242a"></div>
</div>
</body></html>
